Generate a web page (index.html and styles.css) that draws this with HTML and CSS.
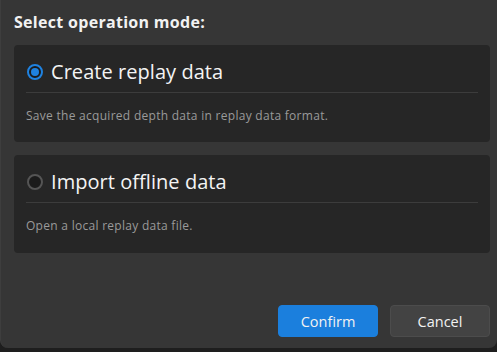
FILE: index.html
```html
<!DOCTYPE html>
<html>
<head>
<meta charset="utf-8">
<link rel="stylesheet" href="styles.css">
</head>
<body>
<div class="dialog">
  <div class="title">Select operation mode:</div>
  <div class="card">
    <div class="head">
      <span class="radio checked"></span>
      <span class="label">Create replay data</span>
    </div>
    <div class="divider"></div>
    <div class="desc">Save the acquired depth data in replay data format.</div>
  </div>
  <div class="card second">
    <div class="head">
      <span class="radio"></span>
      <span class="label">Import offline data</span>
    </div>
    <div class="divider"></div>
    <div class="desc">Open a local replay data file.</div>
  </div>
  <div class="actions">
    <button class="btn primary">Confirm</button>
    <button class="btn">Cancel</button>
  </div>
</div>
</body>
</html>
```
FILE: styles.css
```css
html, body {
  margin: 0;
  padding: 0;
  background: #1e1e1e;
}
body {
  font-family: "Open Sans", "Noto Sans", sans-serif;
  color: #ffffff;
}
.dialog {
  width: 497px;
  height: 348px;
  box-sizing: border-box;
  background: #363636;
  border-radius: 0 0 8px 8px;
  border-left: 1px solid #3e3e3e;
  padding: 12px 7px 0 13px;
  display: flex;
  flex-direction: column;
}
.title {
  font-size: 16px;
  font-weight: 700;
  line-height: 20px;
  height: 20px;
  margin-bottom: 13px;
  color: #f2f2f2;
  letter-spacing: 0.3px;
}
.card {
  background: #262626;
  border-radius: 4px;
  height: 97px;
  box-sizing: border-box;
  padding: 0 12px;
}
.card.second {
  margin-top: 13px;
  height: 98px;
}
.head {
  height: 47px;
  box-sizing: border-box;
  padding-top: 7px;
  display: flex;
  align-items: center;
  gap: 8px;
}
.radio {
  width: 16px;
  height: 16px;
  box-sizing: border-box;
  border-radius: 50%;
  border: 2px solid #555555;
  background: #1b1b1b;
  margin-left: 1px;
  position: relative;
}
.radio.checked {
  border-color: #1f82e0;
  background: #1b1b1b;
}
.radio.checked::after {
  content: "";
  position: absolute;
  left: 2px;
  top: 2px;
  width: 8px;
  height: 8px;
  border-radius: 50%;
  background: #1f82e0;
}
.label {
  font-size: 20px;
  line-height: 24px;
  color: #f4f4f4;
  letter-spacing: 0.05px;
}
.divider {
  height: 1px;
  background: #3c3c3c;
}
.desc {
  margin-top: 15px;
  font-size: 12px;
  line-height: 16px;
  color: #9a9a9a;
  letter-spacing: 0.28px;
}
.actions {
  margin-top: auto;
  margin-bottom: 11px;
  display: flex;
  justify-content: flex-end;
  gap: 12px;
}
.btn {
  width: 100px;
  height: 32px;
  box-sizing: border-box;
  border-radius: 4px;
  border: 1px solid #4c4c4c;
  background: #434343;
  color: #f2f2f2;
  font-family: "Open Sans", "Noto Sans", sans-serif;
  font-size: 14.5px;
  padding: 0;
}
.btn.primary {
  background: #1b7fdd;
  border-color: #1b7fdd;
}
```
